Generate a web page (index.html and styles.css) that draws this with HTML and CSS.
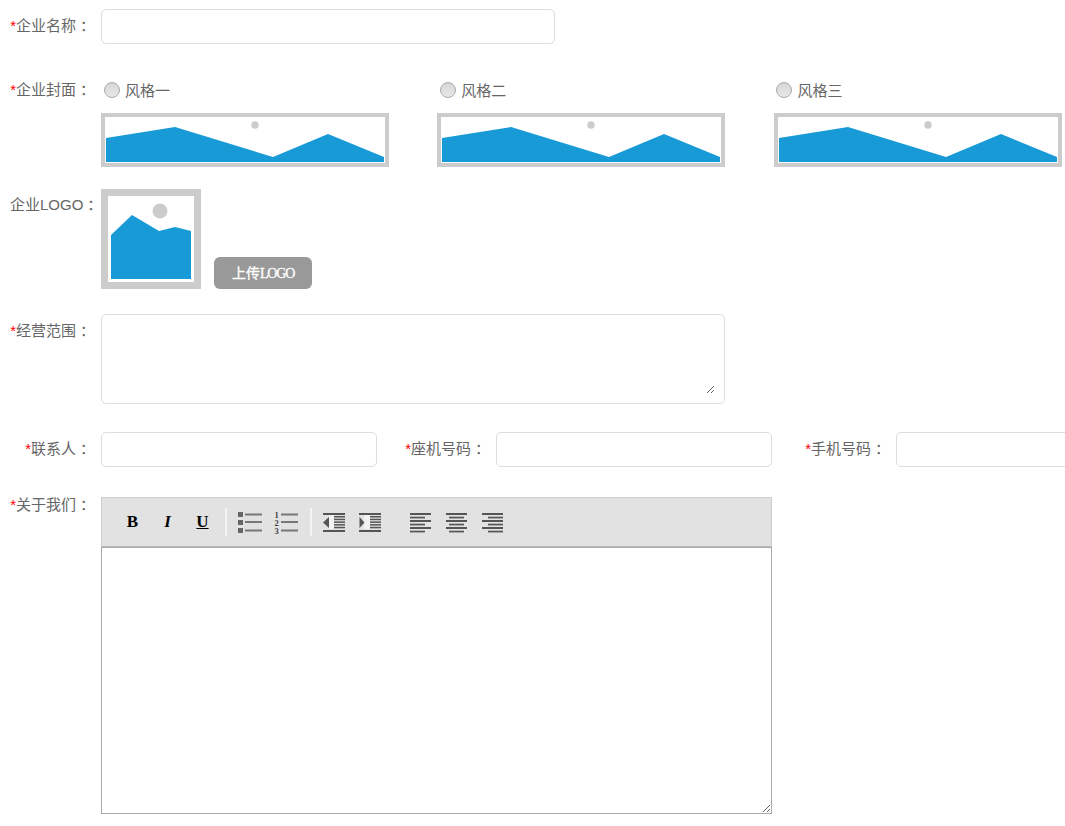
FILE: index.html
```html
<!DOCTYPE html>
<html lang="zh-CN">
<head>
  <meta charset="UTF-8">
  <title>企业信息</title>
  <link rel="stylesheet" href="styles.css">
</head>
<body>
  <form class="company-form">
    <div class="row row-name">
      <label class="row-label"><span class="req">*</span>企业名称<span class="colon">：</span></label>
      <input class="text-input input-wide" type="text">
    </div>

    <div class="row row-cover">
      <label class="row-label"><span class="req">*</span>企业封面<span class="colon">：</span></label>
      <div class="cover-list">
        <div class="cover-item">
          <label class="cover-radio"><input type="radio" name="cover"><span>风格一</span></label>
          <svg class="cover-pic" width="288" height="54" viewBox="0 0 288 54">
            <rect x="2" y="2" width="284" height="50" fill="#fff" stroke="#ccc" stroke-width="4"/>
            <circle cx="154" cy="12" r="3.7" fill="#ccc"/>
            <path d="M5 25 74 14 172 44 227 21 283 44V49H5Z" fill="#189ad6"/>
          </svg>
        </div>
        <div class="cover-item">
          <label class="cover-radio"><input type="radio" name="cover"><span>风格二</span></label>
          <svg class="cover-pic" width="288" height="54" viewBox="0 0 288 54">
            <rect x="2" y="2" width="284" height="50" fill="#fff" stroke="#ccc" stroke-width="4"/>
            <circle cx="154" cy="12" r="3.7" fill="#ccc"/>
            <path d="M5 25 74 14 172 44 227 21 283 44V49H5Z" fill="#189ad6"/>
          </svg>
        </div>
        <div class="cover-item">
          <label class="cover-radio"><input type="radio" name="cover"><span>风格三</span></label>
          <svg class="cover-pic" width="288" height="54" viewBox="0 0 288 54">
            <rect x="2" y="2" width="284" height="50" fill="#fff" stroke="#ccc" stroke-width="4"/>
            <circle cx="154" cy="12" r="3.7" fill="#ccc"/>
            <path d="M5 25 74 14 172 44 227 21 283 44V49H5Z" fill="#189ad6"/>
          </svg>
        </div>
      </div>
    </div>

    <div class="row row-logo">
      <label class="row-label label-logo">企业LOGO<span class="colon">：</span></label>
      <svg class="logo-pic" width="100" height="100" viewBox="0 0 100 100">
        <rect x="3.5" y="3.5" width="93" height="93" fill="#fff" stroke="#ccc" stroke-width="7"/>
        <circle cx="59" cy="22" r="7.5" fill="#ccc"/>
        <path d="M10 46 31 26 58 42 74 38 90 42V90H10Z" fill="#189ad6"/>
      </svg>
      <button class="upload-btn" type="button">上传<span class="upload-latin">LOGO</span></button>
    </div>

    <div class="row row-scope">
      <label class="row-label"><span class="req">*</span>经营范围<span class="colon">：</span></label>
      <div class="scope-box"><textarea class="scope-area"></textarea></div>
    </div>

    <div class="row row-contact">
      <label class="row-label"><span class="req">*</span>联系人<span class="colon">：</span></label>
      <input class="text-input input-short" type="text">
      <label class="row-label label-phone"><span class="req">*</span>座机号码<span class="colon">：</span></label>
      <input class="text-input input-short" type="text">
      <label class="row-label label-mobile"><span class="req">*</span>手机号码<span class="colon">：</span></label>
      <input class="text-input input-short" type="text">
    </div>

    <div class="row row-about">
      <label class="row-label label-about"><span class="req">*</span>关于我们<span class="colon">：</span></label>
      <div class="editor">
        <div class="toolbar">
          <span class="tool tool-text tool-b">B</span>
          <span class="tool tool-text tool-i">I</span>
          <span class="tool tool-text tool-u">U</span>
          <span class="tool-sep sep-first"></span>
          <span class="tool">
            <svg width="26" height="24" viewBox="0 0 26 24">
              <g fill="#666"><rect x="1" y="2" width="5" height="5"/><rect x="1" y="10" width="5" height="5"/><rect x="1" y="18" width="5" height="5"/></g>
              <g fill="#777"><rect x="8" y="3.500" width="17" height="2"/><rect x="8" y="11" width="17" height="2"/><rect x="8" y="19.500" width="17" height="2"/></g>
            </svg>
          </span>
          <span class="tool">
            <svg width="26" height="24" viewBox="0 0 26 24">
              <text class="num" x="1.500" y="7.500">1</text><text class="num" x="1.500" y="15.500">2</text><text class="num" x="1.500" y="23.500">3</text>
              <g fill="#777"><rect x="8" y="3.500" width="17" height="2"/><rect x="8" y="11" width="17" height="2"/><rect x="8" y="19.500" width="17" height="2"/></g>
            </svg>
          </span>
          <span class="tool-sep"></span>
          <span class="tool">
            <svg width="24" height="22" viewBox="0 0 24 22" fill="#555">
              <rect x="7" y="4" width="5" height="14" fill="#f2f2f2"/>
              <rect x="1" y="2" width="22" height="2"/><rect x="1" y="19" width="22" height="2"/>
              <rect x="12" y="5" width="11" height="1.500"/><rect x="12" y="7.700" width="11" height="1.500"/><rect x="12" y="10.400" width="11" height="1.500"/><rect x="12" y="13.100" width="11" height="1.500"/><rect x="12" y="15.800" width="11" height="1.500"/>
              <path d="M7 6V17L1 11.500Z"/>
            </svg>
          </span>
          <span class="tool">
            <svg width="24" height="22" viewBox="0 0 24 22" fill="#555">
              <rect x="6" y="4" width="6" height="14" fill="#f2f2f2"/>
              <rect x="1" y="2" width="22" height="2"/><rect x="1" y="19" width="22" height="2"/>
              <rect x="12" y="5" width="11" height="1.500"/><rect x="12" y="7.700" width="11" height="1.500"/><rect x="12" y="10.400" width="11" height="1.500"/><rect x="12" y="13.100" width="11" height="1.500"/><rect x="12" y="15.800" width="11" height="1.500"/>
              <path d="M1.500 6V17L6.500 11.500Z"/>
            </svg>
          </span>
          <span class="tool tool-gap">
            <svg width="24" height="22" viewBox="0 0 24 22" fill="#555">
              <rect x="2" y="2" width="21" height="2"/><rect x="2" y="5.700" width="15" height="1.700"/><rect x="2" y="9" width="21" height="2"/><rect x="2" y="12.700" width="15" height="1.700"/><rect x="2" y="16" width="21" height="2"/><rect x="2" y="19.700" width="15" height="1.700"/>
            </svg>
          </span>
          <span class="tool">
            <svg width="24" height="22" viewBox="0 0 24 22" fill="#555">
              <rect x="2" y="2" width="21" height="2"/><rect x="5" y="5.700" width="15" height="1.700"/><rect x="2" y="9" width="21" height="2"/><rect x="5" y="12.700" width="15" height="1.700"/><rect x="2" y="16" width="21" height="2"/><rect x="5" y="19.700" width="15" height="1.700"/>
            </svg>
          </span>
          <span class="tool">
            <svg width="24" height="22" viewBox="0 0 24 22" fill="#555">
              <rect x="2" y="2" width="21" height="2"/><rect x="8" y="5.700" width="15" height="1.700"/><rect x="2" y="9" width="21" height="2"/><rect x="8" y="12.700" width="15" height="1.700"/><rect x="2" y="16" width="21" height="2"/><rect x="8" y="19.700" width="15" height="1.700"/>
            </svg>
          </span>
        </div>
        <textarea class="editor-body"></textarea>
      </div>
    </div>
  </form>
</body>
</html>
```

FILE: styles.css
```css
html, body { margin: 0; overflow: hidden; background: #fff; }
body { font-family: "Liberation Sans", "Noto Sans CJK SC", sans-serif; font-size: 15px; color: #666; }
.company-form { padding-top: 9px; width: 1200px; }
.row { display: flex; align-items: flex-start; }
.row-name { margin-bottom: 29px; }
.row-cover { margin-bottom: 22px; }
.row-logo { margin-bottom: 25px; }
.row-scope { margin-bottom: 28px; }
.row-contact { margin-bottom: 30px; }
.row-label {
  flex: 0 0 91px;
  min-width: 0;
  box-sizing: border-box;
  margin-right: 10px;
  padding-top: 8px;
  line-height: 18px;
  text-align: right;
  white-space: nowrap;
}
.colon { padding-left: 4px; margin-right: -4px; }
.label-logo { text-align: left; padding-left: 10px; padding-top: 7px; }
.label-phone { flex-basis: 109px; }
.label-mobile { flex-basis: 114px; }
.label-about { padding-top: 0; line-height: 16px; }
.req { color: #f00; }
.text-input {
  box-sizing: border-box;
  display: block;
  flex: none;
  border: 1px solid #ddd;
  border-radius: 5px;
  background: #fff;
  outline: none;
  margin: 0;
}
.input-wide { width: 454px; height: 35px; }
.input-short { width: 276px; height: 35px; }
.scope-box {
  box-sizing: border-box;
  flex: none;
  width: 624px;
  height: 90px;
  padding: 9px;
  border: 1px solid #ddd;
  border-radius: 5px;
}
.scope-area {
  box-sizing: border-box;
  display: block;
  width: 100%;
  height: 100%;
  margin: 0;
  padding: 0;
  border: none;
  outline: none;
  background: transparent;
}
.cover-list { display: flex; gap: 48.300px; padding-top: 9px; }
.cover-radio { display: flex; align-items: center; height: 18px; margin-bottom: 13px; padding-left: 2.500px; }
.cover-radio input {
  appearance: none;
  box-sizing: border-box;
  width: 16px;
  height: 16px;
  margin: 0 5.500px 2px 0;
  border: 1px solid #aaa;
  border-radius: 50%;
  background: linear-gradient(#d6d6d6, #e8e8e8);
}
.cover-radio span { line-height: 16px; margin-bottom: 1px; }
.cover-pic, .logo-pic { display: block; }
.logo-pic { flex: none; }
.upload-btn {
  align-self: flex-end;
  width: 98px;
  height: 32px;
  margin-left: 13px;
  padding: 0 0 3px;
  border: none;
  border-radius: 6px;
  background: #999;
  color: #fff;
  font-family: "Liberation Serif", "Noto Sans CJK SC", serif;
  font-size: 14px;
  -webkit-text-stroke: 0.300px #fff;
}
.upload-latin { letter-spacing: -1.200px; }
.editor { flex: none; width: 671px; }
.toolbar {
  box-sizing: border-box;
  display: flex;
  align-items: center;
  height: 50px;
  padding-left: 13px;
  border: 1px solid #ccc;
  border-bottom-color: #bbb;
  background: #e2e2e2;
}
.tool { display: flex; align-items: center; justify-content: center; flex: none; width: 36px; height: 24px; }
.tool svg { display: block; }
.tool-text { width: 35px; font-family: "Liberation Serif", serif; font-size: 17px; font-weight: bold; color: #000; }
.tool-i { font-style: italic; }
.tool-u { text-decoration: underline; }
.tool-sep { flex: none; width: 2px; height: 28px; margin: 0 4px 0 6px; background: #f4f4f4; }
.sep-first { margin: 0 5px; }
.tool-gap { margin-left: 14px; }
.num { font-family: "Liberation Serif", serif; font-size: 8.500px; font-weight: bold; fill: #444; }
.editor-body {
  box-sizing: border-box;
  display: block;
  width: 671px;
  height: 267px;
  margin: 0;
  border: 1px solid #aaa;
  outline: none;
  background: #fff;
}
```
